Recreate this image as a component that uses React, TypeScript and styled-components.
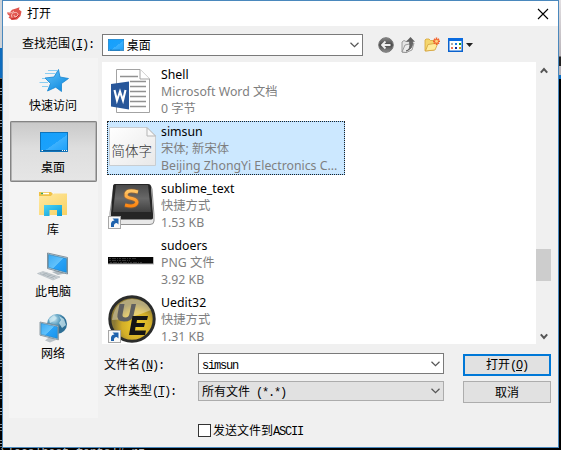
import React from "react";
import styled, { createGlobalStyle, css } from "styled-components";

const ui = `"Noto Sans", "Noto Sans CJK SC", sans-serif`;
const cjk = `"Noto Sans CJK SC", sans-serif`;

const GlobalStyle = createGlobalStyle`
  * { box-sizing: border-box; }
  html, body { margin: 0; height: 100%; overflow: hidden; }
  svg { display: block; flex: none; overflow: visible; }
  button { font: inherit; color: inherit; margin: 0; padding: 0; border: 0; background: none; }
`;

const Desktop = styled.main`
  width: 561px;
  height: 450px;
  display: grid;
  grid-template: 448px 2px / 2px 557px 2px;
  background: #000;
  overflow: hidden;
  font: 12px/17px ${cjk};
  color: #000;
`;

const LeftStrip = styled.div`
  background:
    linear-gradient(#cfd3d8 0 48px, transparent 48px),
    linear-gradient(#0f6cbd 0 78px, transparent 78px),
    repeating-linear-gradient(#000 0 8px, #8a8f96 8px 9px, #000 9px 11px, #9a9da2 11px 12px, #000 12px 14px, #6f7276 14px 15px, #000 15px 16px);
`;

const RightStrip = styled.div`
  background: linear-gradient(#e2dfe2 0, #b9b4b9 56px, #222 57px 66px, #b9b4b9 66px 75px, #0a6fc4 75px 79px, #000 79px);
`;

const BottomStrip = styled.div`
  grid-column: 1 / -1;
  overflow: hidden;
  font: 12px/14px "Liberation Mono", monospace;
  color: #b9b9b9;
  white-space: pre;
  letter-spacing: -0.3px;
`;

const BottomText = styled.div`
  margin-top: -2px;
`;

const Dialog = styled.section`
  border: 1px solid #4a88bd;
  background: #f0f0f0;
  min-width: 0;
`;

const TitleBar = styled.header`
  height: 25px;
  display: flex;
  align-items: center;
  padding: 0 10px 0 4px;
  background: #fff;
`;

const Title = styled.h1`
  margin: -2px auto 0 5px;
  font: 12px/17px ${cjk};
`;

const LookIn = styled.div`
  height: 32px;
  padding: 8px 0 0 19px;
  display: flex;
  align-items: flex-start;
`;

const Mono = styled.span`
  font: 12px/1 "Liberation Mono", monospace;
  letter-spacing: -1.2px;
  white-space: pre;
`;

const Key = styled.u`
  text-underline-offset: 1px;
`;

const Label = styled.label<{ $width: number }>`
  width: ${(p) => p.$width}px;
  flex: none;
  white-space: nowrap;
`;

const Combo = styled.div<{ $width: number; $height: number; $muted?: boolean; $pad: number }>`
  width: ${(p) => p.$width}px;
  height: ${(p) => p.$height}px;
  flex: none;
  display: flex;
  align-items: center;
  padding: 0 3px 0 ${(p) => p.$pad}px;
  border: 1px solid ${(p) => (p.$muted ? "#acacac" : "#7a7a7a")};
  background: ${(p) => (p.$muted ? "#e1e1e1" : "#fff")};
`;

const ComboText = styled.span`
  flex: 1;
  white-space: pre;
  margin-top: -1px;
`;

const Tools = styled.div`
  display: flex;
  align-items: center;
  height: 22px;
  margin-left: 15px;
  gap: 7px;
`;

const Content = styled.div`
  display: flex;
  padding-left: 6px;
`;

const Places = styled.nav`
  width: 89px;
  height: 360px;
  padding-top: 1px;
  background: #f4f4f4;
`;

const Place = styled.button<{ $active?: boolean }>`
  width: 87px;
  height: 62px;
  margin-left: 1px;
  padding-top: 5px;
  display: flex;
  flex-direction: column;
  align-items: center;
  line-height: 17px;
  ${(p) =>
    p.$active &&
    css`
      height: 61px;
      margin-bottom: 1px;
      background: linear-gradient(#c8c8c8, #dedede 45%, #e6e6e6);
      box-shadow: inset 0 0 0 1px #848484, inset 0 0 0 2px #b3b3b3;
      border-radius: 2px;
    `}
`;

const PlaceLabel = styled.span`
  margin-right: 1px;
`;

const Main = styled.div`
  margin-left: 4px;
  width: 450px;
`;

const Browser = styled.div`
  margin-top: 4px;
  height: 282px;
  display: flex;
`;

const Files = styled.ul`
  width: 434px;
  height: 282px;
  margin: 0;
  padding: 2px 0 0 5px;
  list-style: none;
  background: #fff;
  overflow: hidden;
`;

const File = styled.li<{ $selected?: boolean }>`
  width: 238px;
  height: 54px;
  margin-bottom: 3px;
  display: flex;
  align-items: flex-start;
  padding: 2px 0 0 1px;
  ${(p) =>
    p.$selected &&
    css`
      background: #cce8ff;
      outline: 1px dotted #222;
      outline-offset: -1px;
      box-shadow: inset 0 0 0 1px #99d1ff;
    `}
`;

const FileIcon = styled.div`
  width: 48px;
  height: 48px;
  margin: 1px 5px 0 0;
`;

const Name = styled.div`
  font: 12.3px/17px ${ui};
  white-space: nowrap;
`;

const Meta = styled(Name)`
  color: #7f7f7f;
`;

const ScrollBar = styled.div`
  width: 16px;
  display: flex;
  flex-direction: column;
  align-items: center;
  padding: 5px 0 5px;
`;

const Thumb = styled.div`
  width: 15px;
  height: 32px;
  margin: 175px 1px 52px 0;
  flex: none;
  background: #cdcdcd;
`;

const Form = styled.div`
  display: grid;
  grid-template-columns: 96px 246px 88px;
  column-gap: 0;
  padding: 9px 0 0;
`;

const FormLabel = styled.label`
  padding: 2px 0 0 2px;
  height: 19px;
  white-space: nowrap;
`;

const Action = styled.button<{ $primary?: boolean }>`
  width: 88px;
  height: 22px;
  margin: ${(p) => (p.$primary ? "1px" : "0")} 0 0 19px;
  padding-bottom: 2px;
  line-height: 15px;
  background: #e1e1e1;
  border: ${(p) => (p.$primary ? "2px solid #0078d7" : "1px solid #adadad")};
`;

const Gap = styled.div`
  grid-column: 1 / -1;
  height: 5px;
`;

const TypeLabel = styled(FormLabel)`
  padding-top: 0;
`;

const Check = styled.label`
  display: flex;
  align-items: center;
  height: 17px;
  margin: 19px 0 0 96px;
  gap: 2px;
`;

const CheckText = styled.span`
  margin-top: -2px;
`;

const Box = styled.span`
  width: 13px;
  height: 13px;
  border: 1px solid #333;
  background: #fff;
`;

const Chevron = () => (
  <svg width="9" height="6" viewBox="0 0 9 6">
    <path d="M.5 .7 4.5 4.6 8.5 .7" fill="none" stroke="#555" strokeWidth="1.2" />
  </svg>
);

const Arrow = ({ up }: { up?: boolean }) => (
  <svg width="8" height="7" viewBox="0 0 8 7">
    <path d={up ? "M.8 5.6 4 2 7.2 5.6" : "M.8 1.4 4 5 7.2 1.4"} fill="none" stroke="#555" strokeWidth="2" />
  </svg>
);

const DesktopIcon = ({ w, h }: { w: number; h: number }) => (
  <svg width={w} height={h} viewBox="0 0 28 20" preserveAspectRatio="none">
    <defs>
      <linearGradient id={`dk${w}`} x1="0" y1="0" x2="1" y2="1">
        <stop offset="0" stopColor="#14a0fc" />
        <stop offset=".55" stopColor="#1ba1fb" />
        <stop offset=".56" stopColor="#3db1fd" />
        <stop offset="1" stopColor="#1a9ffa" />
      </linearGradient>
    </defs>
    <rect x=".5" y=".5" width="27" height="19" fill={`url(#dk${w})`} stroke="#0f74bb" />
    <path d="M1 18.5H27" stroke="#0b5f9e" />
    <path d="M1.500 18.500H3M22 18.500h1M24 18.500h1M26 18.500h1" stroke="#fff" />
  </svg>
);

const AppLogo = () => (
  <svg width="15" height="14" viewBox="0 0 15 14">
    <path d="M0 5.500 3 5.200 5 2.800 9 1.500 12.500 .2 12 2.500 14.500 4.500 13.500 9 10 12.500 5 13 1.500 10.500 2.800 9 .8 7.500Z" fill="#e0554e" />
    <path d="M1.500 6q4 .3 5.500-2M5 10.500q-1.800-3.200 1.500-4.700 4-1.200 4.500 1.700-.2 2.600-3.200 2.300-1.500-.8-.2-2" fill="none" stroke="#ffd9d2" strokeWidth=".8" />
    <path d="M4 12q5 1 8-4" fill="none" stroke="#c52a2a" strokeWidth="1" />
  </svg>
);

const Star = () => (
  <svg width="32" height="32" viewBox="0 0 32 32">
    <defs>
      <linearGradient id="star" x1="0" y1="0" x2=".7" y2="1">
        <stop offset="0" stopColor="#64c5fa" />
        <stop offset="1" stopColor="#118be0" />
      </linearGradient>
    </defs>
    <path d="M20.500 5.500 22 13 30.500 14.500 23.500 19.500 23.500 27.500 17.700 23.200 9.500 27 12.500 19.500 7 14 16 13Z" fill="url(#star)" stroke="#1685d0" strokeWidth=".8" />
    <path d="M10 6.500H19.500M7 9.500H18M4 14.500H7M1.500 18.500H10M4 22.500H10" stroke="#8bcdf2" strokeWidth="1" />
  </svg>
);

const Library = () => (
  <svg width="32" height="32" viewBox="0 0 32 32">
    <defs>
      <linearGradient id="lib" x1="0" y1="0" x2="1" y2="1">
        <stop offset="0" stopColor="#ffe9a2" />
        <stop offset="1" stopColor="#f9d263" />
      </linearGradient>
      <linearGradient id="libb" x1="0" y1="0" x2="1" y2="1">
        <stop offset="0" stopColor="#4cd2f4" />
        <stop offset="1" stopColor="#079bd7" />
      </linearGradient>
    </defs>
    <path d="M1 4H13L15 6 13 8.500H1Z" fill="#f0c146" />
    <path d="M3 5.500H11" stroke="#fff" strokeWidth="1.500" />
    <path d="M3 5.500H5" stroke="#38a85a" strokeWidth="1.500" />
    <path d="M1 8H13L16 5.500H29V27H1Z" fill="url(#lib)" />
    <path d="M6 28V17H24V28H19V22H11.500V28Z" fill="url(#libb)" />
  </svg>
);

const Monitor = ({ id }: { id: string }) => (
  <g>
    <defs>
      <linearGradient id={id} x1="0" y1="0" x2="1" y2="1">
        <stop offset="0" stopColor="#3ba9f2" />
        <stop offset=".5" stopColor="#62c2fb" />
        <stop offset=".52" stopColor="#2aa2f6" />
        <stop offset="1" stopColor="#1793ec" />
      </linearGradient>
    </defs>
    <path d="M0 0 20 4.500V21L0 15.500Z" fill="#dfe5e9" stroke="#687a86" strokeWidth=".8" />
    <path d="M1 1.400 19 5.500V19.500L1 14.500Z" fill={`url(#${id})`} stroke="#26729f" strokeWidth=".6" />
  </g>
);

const Computer = () => (
  <svg width="32" height="32" viewBox="0 0 32 32">
    <path d="M14 22 20 20.500 27 23.500 20 25Z" fill="#aeb8be" />
    <g transform="translate(9.500 3)"><Monitor id="pc" /></g>
    <path d="M-.5 23.500 5 21.500 22 27 15 30Z" fill="#cfd5d9" stroke="#a3adb3" strokeWidth=".5" />
    <path d="M2 23.500 16 28.500M4.500 22.700 18.500 27.500M5 25 9.500 23M9 26.500 13.500 24.500M12.500 28 17 26" stroke="#9ea8ae" strokeWidth=".6" />
  </svg>
);

const Network = () => (
  <svg width="32" height="32" viewBox="0 0 32 32">
    <defs>
      <radialGradient id="globe" cx=".35" cy=".25">
        <stop offset="0" stopColor="#c9e8f4" />
        <stop offset=".6" stopColor="#5d9fc0" />
        <stop offset="1" stopColor="#2d6f96" />
      </radialGradient>
    </defs>
    <circle cx="19" cy="12" r="10" fill="url(#globe)" />
    <path d="M11 7 16 3 19 6 16 9 12 11ZM21 4 26 7 28 13 24 16 21 11 23 8Z" fill="#cfeaf2" opacity=".75" />
    <path d="M7 28.500 12 24.500 18 28 12 30.500Z" fill="#b9c2c8" />
    <g transform="translate(2 10) scale(.92 .85)"><Monitor id="net" /></g>
  </svg>
);

const Back = () => (
  <svg width="16" height="16" viewBox="0 0 16 16">
    <defs>
      <linearGradient id="back" x1="0" y1="0" x2="0" y2="1">
        <stop offset="0" stopColor="#888" />
        <stop offset=".5" stopColor="#484848" />
        <stop offset="1" stopColor="#909090" />
      </linearGradient>
    </defs>
    <circle cx="8" cy="8" r="7.300" fill="url(#back)" stroke="#777" />
    <path d="M12.500 8H4M7.500 4.500 4 8 7.500 11.500" fill="none" stroke="#eee" strokeWidth="1.800" />
  </svg>
);

const UpFolder = () => (
  <svg width="16" height="16" viewBox="0 0 16 16">
    <path d="M1 15V5L3 3.500 5 4.500 10 3V11L6 15.500Z" fill="#e4e4e4" stroke="#888" strokeWidth=".8" />
    <path d="M1 15 4 8 13 6 11 13 5 15.500Z" fill="#ececec" stroke="#888" strokeWidth=".8" />
    <path d="M5 14Q10 13 8.500 4.500H11.500Q12.500 12 5 14Z" fill="#666" stroke="#555" strokeWidth=".7" />
    <path d="M5 4.800 9.500 0 14 4.800Z" fill="#606060" />
  </svg>
);

const NewFolder = () => (
  <svg width="16" height="16" viewBox="0 0 16 16">
    <path d="M1 14V3L2 2H5L6.500 3.500H10V13Z" fill="#f5d66d" stroke="#d6a435" strokeWidth=".8" />
    <path d="M1.500 14 4 7.500 14 6 11 13Z" fill="#ffec9b" stroke="#d3a13b" strokeWidth=".8" />
    <path d="M12.500 .5V8M9 4.200H16M10 1.700 15 6.700M15 1.700 10 6.700" stroke="#f2632d" strokeWidth="1.500" />
    <circle cx="12.500" cy="4.200" r="1.500" fill="#ffd27b" />
  </svg>
);

const Views = () => (
  <svg width="26" height="16" viewBox="-1 0 26 16">
    <rect x=".75" y="1.750" width="13.500" height="12.500" fill="#fff" stroke="#0a62ce" strokeWidth="1.500" />
    <path d="M0 2.500H15" stroke="#0a6be0" strokeWidth="3" />
    <g>
      <rect x="3" y="6" width="2" height="2" fill="#aaa" />
      <rect x="7" y="6" width="2" height="2" fill="#1779e6" />
      <rect x="11" y="6" width="2" height="2" fill="#119b22" />
      <rect x="3" y="10" width="2" height="2" fill="#ee7352" />
      <rect x="7" y="10" width="2" height="2" fill="#102d9b" />
      <rect x="11" y="10" width="2" height="2" fill="#d29b12" />
    </g>
    <path d="M18 6H25L21.500 10Z" fill="#222" />
  </svg>
);

const Shortcut = () => (
  <g>
    <rect x=".5" y="35.500" width="12" height="12" fill="#f8f8f8" stroke="#a7a7a7" />
    <path d="M3 46V42.500Q3.500 39.500 6.500 39.500L4.500 37.500H10.500V43.500L8.800 42Q5.500 42 6 46Z" fill="#1e62ad" />
  </g>
);

const WordFile = () => (
  <svg width="48" height="48" viewBox="0 0 48 48">
    <path d="M8.500 2.500H32L41.500 12V45.500H8.500Z" fill="#fff" stroke="#a3a3a3" />
    <path d="M32 2.500V12H41.500" fill="#fff" stroke="#a3a3a3" />
    <path d="M12 9.500H30M22 14.500H38M22 19.500H38M22 24.500H38M22 29.500H38M22 34.500H38M22 39.500H38" stroke="#919191" strokeWidth="1.500" />
    <path d="M3 17 21 14.500V42.500L3 39.500Z" fill="#28579a" />
    <path d="M6.500 23 9 33.500 12 24.500 15 33.500 17.500 23" fill="none" stroke="#fff" strokeWidth="2.100" />
  </svg>
);

const FontText = styled.text`
  font: 300 13.500px "Noto Sans CJK SC", sans-serif;
`;

const FontFile = () => (
  <svg width="48" height="48" viewBox="0 0 48 48">
    <defs>
      <linearGradient id="font" x1="0" y1="0" x2="1" y2="1">
        <stop offset="0" stopColor="#fff" />
        <stop offset="1" stopColor="#e8e8e8" />
      </linearGradient>
    </defs>
    <path d="M1.500 3.500H38.500L47.500 12V41.500H1.500Z" fill="url(#font)" stroke="#c8cdd1" />
    <path d="M39 3.500V12H47.500Z" fill="#f8f8f8" stroke="#b5b5b5" />
    <FontText x="3.500" y="32" fill="#333">简体字</FontText>
  </svg>
);

const SublimeFile = () => (
  <svg width="48" height="48" viewBox="0 0 48 48">
    <defs>
      <linearGradient id="sub" x1="0" y1="0" x2="0" y2="1">
        <stop offset="0" stopColor="#4a4a4a" />
        <stop offset=".5" stopColor="#686868" />
        <stop offset="1" stopColor="#404040" />
      </linearGradient>
      <linearGradient id="subs" x1="0" y1="0" x2="0" y2="1">
        <stop offset="0" stopColor="#ffc565" />
        <stop offset="1" stopColor="#ff8610" />
      </linearGradient>
    </defs>
    <path d="M6 4H41Q43 4 44 8L46 34V40Q46 43.500 42 43.500H6Q2 43.500 2 40V32Z" fill="#e8e8e8" stroke="#909090" />
    <path d="M7 3H40Q43 3 43 6L45 33V37Q45 38.500 42 38.500H6Q3 38.500 3 36V32L5 6Q5 3 7 3Z" fill="#252525" />
    <path d="M8 4H40L43 31H5Z" fill="url(#sub)" />
    <path d="M30 11Q18.500 8 18 13.500 17.500 16.500 24 17.500 30 19 28.500 22.500 26 26.500 17 24" fill="none" stroke="#e56f08" strokeWidth="5" opacity=".3" />
    <path d="M30 11Q18.500 8 18 13.500 17.500 16.500 24 17.500 30 19 28.500 22.500 26 26.500 17 24" fill="none" stroke="url(#subs)" strokeWidth="3.200" />
    <Shortcut />
  </svg>
);

const PngFile = () => (
  <svg width="48" height="48" viewBox="0 0 48 48">
    <rect y="19" width="46" height="7.500" fill="#bbb" />
    <rect y="19" width="45" height="6.500" fill="#050505" />
    <path d="M1 20.500H29M1 22.500H22M2 24.500H35" stroke="#555" strokeWidth=".6" strokeDasharray="2 1 4 1 1 1" />
  </svg>
);

const UeditFile = () => (
  <svg width="48" height="48" viewBox="0 0 48 48">
    <defs>
      <radialGradient id="ue" cx=".6" cy=".65">
        <stop offset="0" stopColor="#f3d02c" />
        <stop offset=".65" stopColor="#d2ad28" />
        <stop offset="1" stopColor="#8c7a35" />
      </radialGradient>
    </defs>
    <circle cx="24" cy="24" r="22.200" fill="url(#ue)" stroke="#2b2c2b" strokeWidth="3" />
    <path d="M4 25Q20 25 43 15 37 4 24 4 7 5 4 25Z" fill="#fff" opacity=".35" />
    <path d="M11.500 9H16.500L14.500 19.500Q14 22.500 17.500 22.500 20.500 22.500 21.300 19.500L23.500 9H28L25.500 20.500Q24 26.500 16 26.500 8 26 9.500 19.500Z" fill="#5f5f5f" />
    <path d="M24.500 21H40L39 25H29L28.500 28H37L36 32H27.500L27 35.500H38L37 40H21Z" fill="#151515" />
    <Shortcut />
  </svg>
);

const places = [
  { label: "快速访问", icon: <Star /> },
  { label: "桌面", icon: <svg width="32" height="32"><g transform="translate(2 6)"><DesktopIcon w={28} h={20} /></g></svg>, active: true },
  { label: "库", icon: <Library /> },
  { label: "此电脑", icon: <Computer /> },
  { label: "网络", icon: <Network /> },
];

const files = [
  { name: "Shell", kind: "Microsoft Word 文档", info: "0 字节", icon: <WordFile /> },
  { name: "simsun", kind: "宋体; 新宋体", info: "Beijing ZhongYi Electronics C...", icon: <FontFile />, selected: true },
  { name: "sublime_text", kind: "快捷方式", info: "1.53 KB", icon: <SublimeFile /> },
  { name: "sudoers", kind: "PNG 文件", info: "3.92 KB", icon: <PngFile /> },
  { name: "Uedit32", kind: "快捷方式", info: "1.31 KB", icon: <UeditFile /> },
];

export default function App() {
  return (
    <>
      <GlobalStyle />
      <Desktop>
        <LeftStrip />
        <Dialog>
          <TitleBar>
            <AppLogo />
            <Title>打开</Title>
            <svg width="10" height="10" viewBox="0 0 10 10">
              <path d="M0 0 10 10M10 0 0 10" stroke="#000" strokeWidth="1.100" />
            </svg>
          </TitleBar>
          <LookIn>
            <Label $width={80}>查找范围<Mono>(<Key>I</Key>):</Mono></Label>
            <Combo $width={261} $height={22} $pad={5}>
              <DesktopIcon w={16} h={12} />
              <ComboText>&nbsp;桌面</ComboText>
              <Chevron />
            </Combo>
            <Tools>
              <Back />
              <UpFolder />
              <NewFolder />
              <Views />
            </Tools>
          </LookIn>
          <Content>
            <Places>
              {places.map((p) => (
                <Place key={p.label} $active={p.active}>
                  {p.icon}
                  <PlaceLabel>{p.label}</PlaceLabel>
                </Place>
              ))}
            </Places>
            <Main>
              <Browser>
                <Files>
                  {files.map((f) => (
                    <File key={f.name} $selected={f.selected}>
                      <FileIcon>{f.icon}</FileIcon>
                      <div>
                        <Name>{f.name}</Name>
                        <Meta>{f.kind}</Meta>
                        <Meta>{f.info}</Meta>
                      </div>
                    </File>
                  ))}
                </Files>
                <ScrollBar>
                  <Arrow up />
                  <Thumb />
                  <Arrow />
                </ScrollBar>
              </Browser>
              <Form>
                <FormLabel>文件名<Mono>(<Key>N</Key>):</Mono></FormLabel>
                <Combo $width={246} $height={21} $pad={3}>
                  <ComboText><Mono>simsun</Mono></ComboText>
                  <Chevron />
                </Combo>
                <Action $primary>打开<Mono>(<Key>O</Key>)</Mono></Action>
                <Gap />
                <TypeLabel>文件类型<Mono>(<Key>T</Key>):</Mono></TypeLabel>
                <Combo $width={246} $height={20} $pad={3} $muted>
                  <ComboText>所有文件<Mono> (*.*)</Mono></ComboText>
                  <Chevron />
                </Combo>
                <Action>取消</Action>
              </Form>
              <Check>
                <Box />
                <CheckText>发送文件到<Mono>ASCII</Mono></CheckText>
              </Check>
            </Main>
          </Content>
        </Dialog>
        <RightStrip />
        <BottomStrip>
          <BottomText>\localhost fonts]# rz</BottomText>
        </BottomStrip>
      </Desktop>
    </>
  );
}
